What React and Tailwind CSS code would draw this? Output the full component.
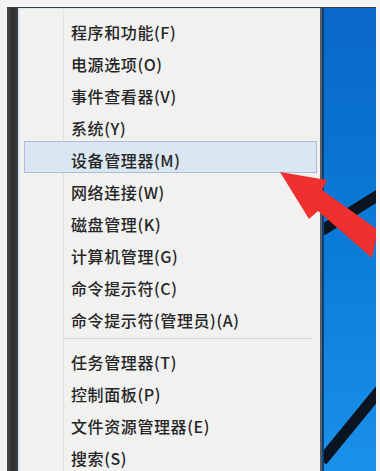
const ITEMS = [
  '程序和功能(F)',
  '电源选项(O)',
  '事件查看器(V)',
  '系统(Y)',
  '设备管理器(M)',
  '网络连接(W)',
  '磁盘管理(K)',
  '计算机管理(G)',
  '命令提示符(C)',
  '命令提示符(管理员)(A)',
]

const ITEMS_2 = ['任务管理器(T)', '控制面板(P)', '文件资源管理器(E)', '搜索(S)']

function MenuItem({ label, active }) {
  return (
    <div
      className={`ml-[4px] mr-[3px] flex h-[32px] items-center pl-[46px] ${
        active ? 'border border-[#a9bfd9] bg-[#dbe6f3]' : 'border border-transparent'
      }`}
    >
      <span className="pt-[5px] text-[16px] font-medium tracking-[0.6px] text-[#262626]">{label}</span>
    </div>
  )
}

function Wallpaper() {
  return (
    <div className="relative w-[54px] border-l-2 border-[#0b3f7a] bg-gradient-to-b from-[#0a68c8] via-[#0a7ad9] to-[#1a91ea]">
      <svg className="absolute inset-0 h-full w-full" viewBox="0 0 52 458" preserveAspectRatio="none">
        <line x1="-2" y1="220" x2="56" y2="184" stroke="#0b1522" strokeWidth="11" />
        <line x1="-2" y1="448" x2="56" y2="378" stroke="#0b1522" strokeWidth="11" />
      </svg>
    </div>
  )
}

export default function App() {
  return (
    <div
      className="relative h-[471px] w-[380px] overflow-hidden bg-[#f3f3f3] pl-[7px] pr-[4px] pt-[7px]"
      style={{ fontFamily: '"Noto Sans CJK SC", "Noto Sans", sans-serif' }}
    >
      <div className="flex h-full flex-col">
        <div className="h-[6px] bg-[#3a3b3d]" />
        <div className="flex flex-1">
          <div className="w-[11px] bg-gradient-to-r from-[#4a4a4a] via-[#2e2e2e] to-[#3c3c3c]" />
          <div className="relative flex-1 border-l-2 border-t border-[#d4e8f6] bg-[#f1f1f0] pt-[4px]">
            <div className="absolute bottom-0 left-[43px] top-0 w-px bg-[#e2e2e2]" />
            <div className="relative">
              {ITEMS.map((label) => (
                <MenuItem key={label} label={label} active={label === '设备管理器(M)'} />
              ))}
              <div className="flex h-[10px] items-center pl-[44px] pr-[8px]">
                <div className="h-px flex-1 bg-[#d6d6d6]" />
              </div>
              {ITEMS_2.map((label) => (
                <MenuItem key={label} label={label} />
              ))}
            </div>
          </div>
          <div className="w-[2px] bg-[#5a5f66]" />
          <Wallpaper />
        </div>
      </div>

      {/* red arrow */}
      <svg className="absolute left-0 top-0" width="376" height="471" viewBox="0 0 376 471">
        <polygon
          points="280,172 327,180 322,190 378,230 372,258 318,211 309,219"
          fill="#f0302e"
        />
      </svg>
    </div>
  )
}
